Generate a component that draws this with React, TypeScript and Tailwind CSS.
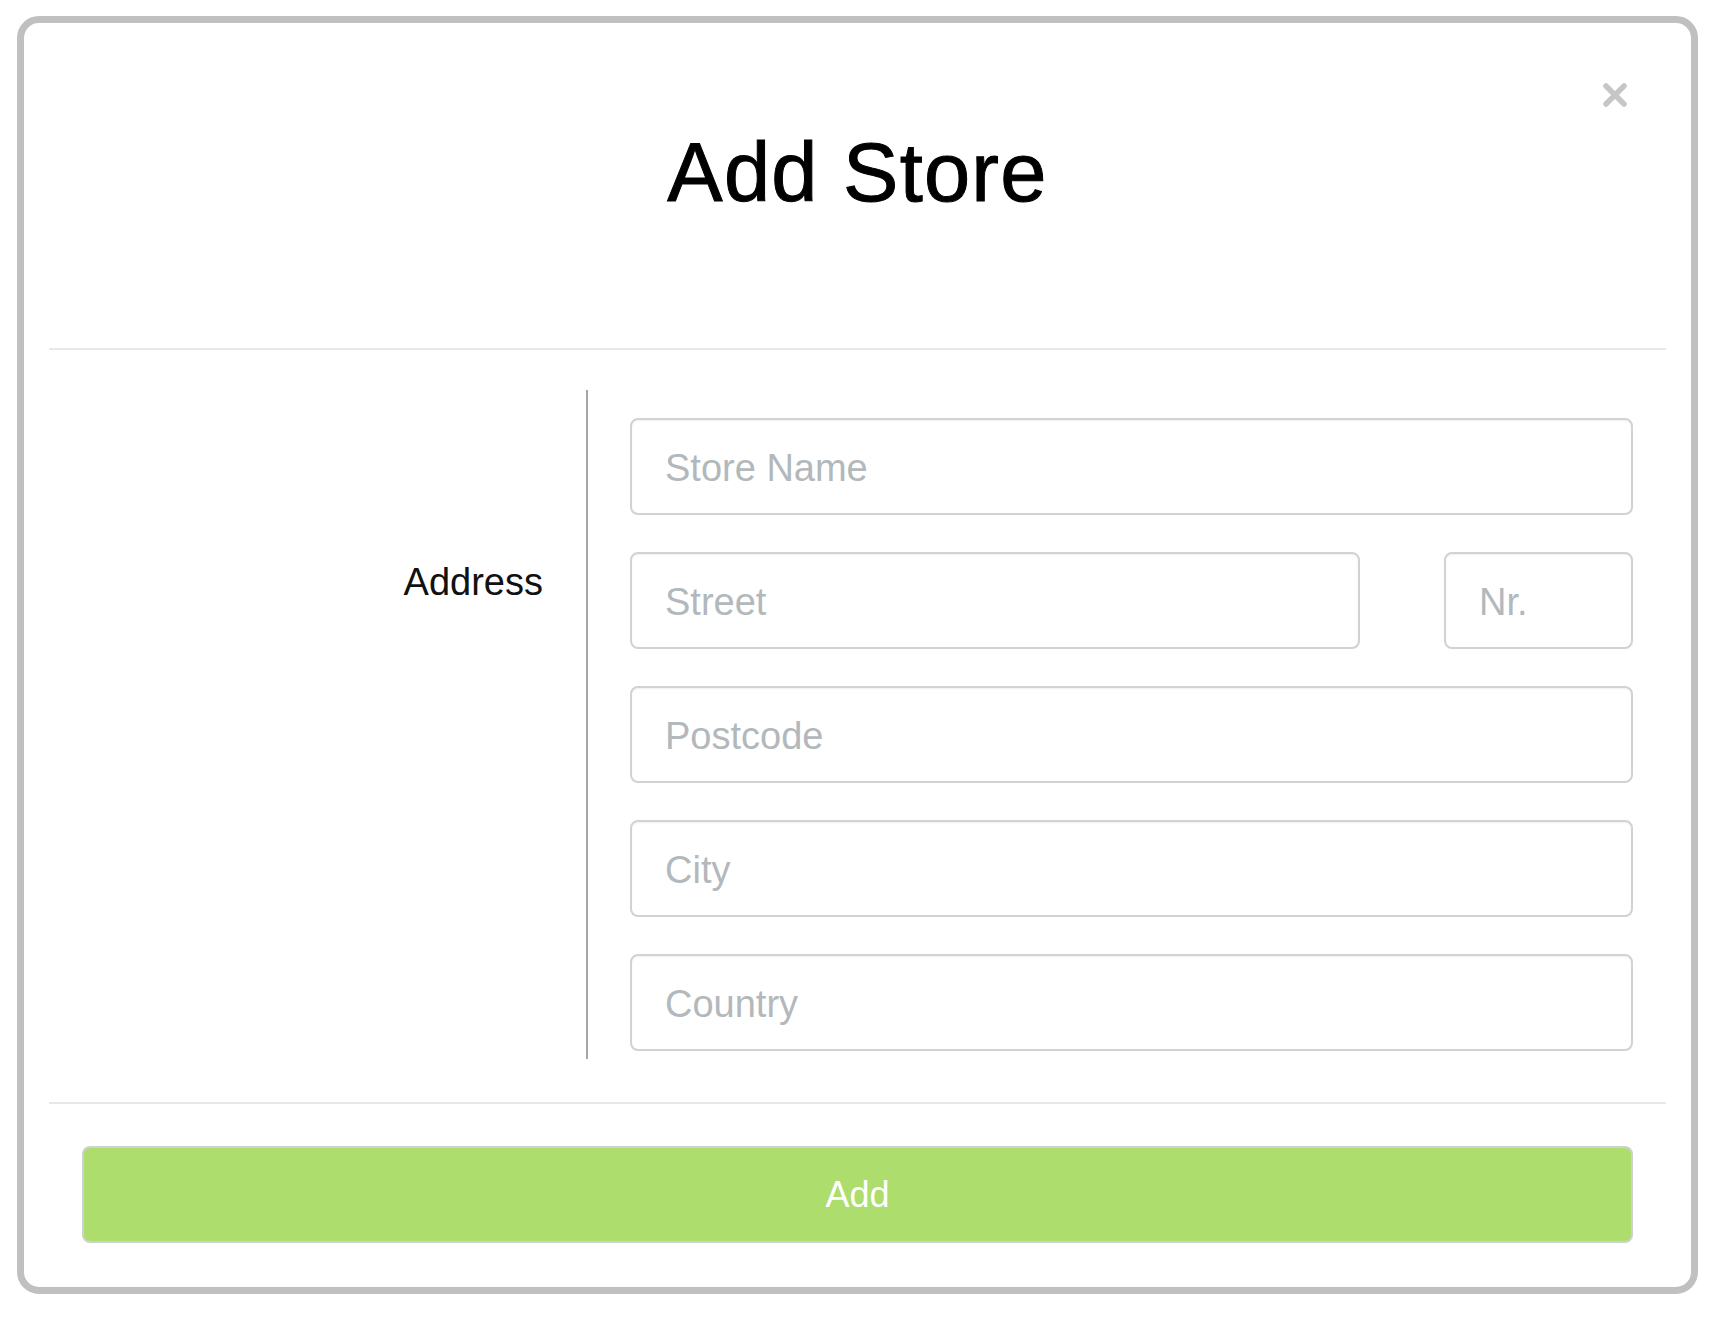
import React from 'react';

const fieldClass =
    "h-[97px] rounded-[8px] border-2 border-[#cfd3d5] bg-white px-[33px] pt-[3px] text-[38px] text-[#333] outline-none shadow-[inset_0_1px_2px_rgba(0,0,0,0.06)] placeholder:text-[#b2b8bb]";

const CloseIcon: React.FC = () => (
    <svg viewBox="0 0 26 26" className="h-[26px] w-[26px]">
        <path d="M4 4 L22 22 M22 4 L4 22" stroke="#c6c6c6" strokeWidth="5.5" strokeLinecap="round" fill="none" />
    </svg>
);

export default function App() {
    return (
        <div className="min-h-screen bg-white pl-[17px] pt-[16px] font-['Liberation_Sans',Arial,sans-serif]">
            <div className="relative flex h-[1278px] w-[1681px] flex-col rounded-[22px] border-[7px] border-[#c0c0c0] bg-white">
                {/* Close */}
                <button type="button" className="absolute right-[63px] top-[59px] flex items-center justify-center">
                    <CloseIcon />
                </button>

                {/* Header */}
                <div className="pb-[134px] pt-[108px] text-center">
                    <h1 className="text-[83px] leading-none tracking-[0.015em] text-black [-webkit-text-stroke:1px_#000]">Add Store</h1>
                </div>
                <div className="mx-[25px] h-[2px] bg-[#e8e8e8]" />

                {/* Body */}
                <div className="flex pt-[40px]">
                    <div className="w-[562px] pr-[43px] pt-[173px] text-right">
                        <span className="text-[38px] leading-none text-[#111]">Address</span>
                    </div>
                    <div className="w-[2px] bg-[#a6a6a6]" />
                    <div className="flex flex-1 flex-col gap-[37px] pb-[8px] pl-[42px] pr-[58px] pt-[28px]">
                        <input className={fieldClass} placeholder="Store Name" />
                        <div className="flex gap-[84px]">
                            <input className={`${fieldClass} w-[730px]`} placeholder="Street" />
                            <input className={`${fieldClass} w-[189px]`} placeholder="Nr." />
                        </div>
                        <input className={fieldClass} placeholder="Postcode" />
                        <input className={fieldClass} placeholder="City" />
                        <input className={fieldClass} placeholder="Country" />
                    </div>
                </div>

                {/* Footer */}
                <div className="mx-[25px] mt-[43px] h-[2px] bg-[#e8e8e8]" />
                <div className="px-[58px] pb-[44px] pt-[42px]">
                    <button
                        type="button"
                        className="flex h-[97px] w-full items-center justify-center rounded-[8px] border-2 border-[#cdd1cf] bg-[#addd6d] text-[36px] text-white"
                    >
                        Add
                    </button>
                </div>
            </div>
        </div>
    );
}
